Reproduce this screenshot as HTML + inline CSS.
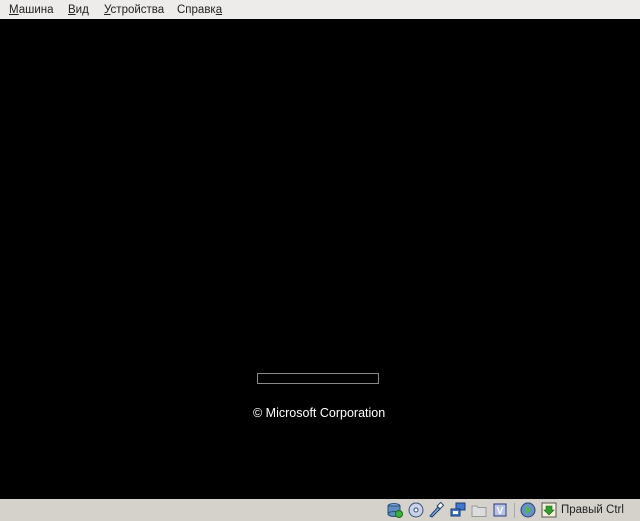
<!DOCTYPE html>
<html><head><meta charset="utf-8"><style>
body{margin:0;width:640px;height:521px;background:#000;overflow:hidden;position:relative;font-family:"Liberation Sans",sans-serif}
#menu{position:absolute;left:0;top:0;width:640px;height:19px;background:#edecea;font-size:11.5px;color:#222}
#menu span{position:absolute;top:4px}
#menu u{text-decoration:underline}
#bar{position:absolute;left:257px;top:373px;width:120px;height:9px;border:1px solid #8a8a8a}
#copy{position:absolute;left:253px;top:406px;color:#fff;font-size:12.5px}
#status{position:absolute;left:0;top:499px;width:640px;height:22px;background:#d5d2cc}
.ic{position:absolute;top:3px;width:16px;height:16px}
#st{position:absolute;left:561px;top:5px;font-size:11.5px;color:#222}
</style></head><body>
<div id="menu">
<span style="left:9px"><u>М</u>ашина</span>
<span style="left:68px"><u>В</u>ид</span>
<span style="left:104px"><u>У</u>стройства</span>
<span style="left:177px">Справк<u>а</u></span>
</div>
<div id="bar"></div>
<div id="copy">© Microsoft Corporation</div>
<div id="status">
<svg class="ic" style="left:387px" viewBox="0 0 16 16"><ellipse cx="7" cy="4" rx="6" ry="2.5" fill="#7fa8d0" stroke="#2a4f7a"/><rect x="1" y="4" width="12" height="8" fill="#5d8fc2" stroke="#2a4f7a"/><ellipse cx="7" cy="12" rx="6" ry="2.5" fill="#5d8fc2" stroke="#2a4f7a"/><circle cx="12" cy="12" r="3.5" fill="#3bb23b" stroke="#1a6a1a"/></svg>
<svg class="ic" style="left:408px" viewBox="0 0 16 16"><circle cx="8" cy="8" r="7" fill="#c8d3e8" stroke="#3a4f7a"/><circle cx="8" cy="8" r="2" fill="#fff" stroke="#3a4f7a"/></svg>
<svg class="ic" style="left:428px" viewBox="0 0 16 16"><path d="M2 14 L10 5 L12 7 L4 15 Z" fill="#7fa8d8" stroke="#1f3f70"/><rect x="10" y="1" width="4" height="5" transform="rotate(45 12 4)" fill="#fff" stroke="#1f3f70"/></svg>
<svg class="ic" style="left:450px" viewBox="0 0 16 16"><rect x="6" y="1" width="9" height="7" fill="#3c78d0" stroke="#1a3c70"/><rect x="1" y="7" width="9" height="7" fill="#3c78d0" stroke="#1a3c70"/><rect x="3" y="9" width="5" height="3" fill="#fff"/></svg>
<svg class="ic" style="left:471px" viewBox="0 0 16 16"><path d="M1 4h5l1 1.5h8v9H1z" fill="#ddd" stroke="#999"/></svg>
<svg class="ic" style="left:492px" viewBox="0 0 16 16"><rect x="2" y="2" width="12" height="12" fill="#b8c4e6" stroke="#2a3a7a"/><text x="8" y="12" font-size="10" font-weight="bold" text-anchor="middle" fill="#fff" font-family="Liberation Sans">V</text></svg>
<div style="position:absolute;left:514px;top:4px;width:1px;height:15px;background:#aaa"></div>
<svg class="ic" style="left:520px" viewBox="0 0 16 16"><circle cx="8" cy="8" r="7" fill="#6a8fc8" stroke="#2a4070"/><path d="M6 3l5 5-5 5z" fill="#4bbf3a"/></svg>
<svg class="ic" style="left:541px" viewBox="0 0 16 16"><rect x="1" y="1" width="14" height="14" fill="#f4f0d8" stroke="#555"/><path d="M5 4h6v4h2l-5 5-5-5h2z" fill="#2fa02f" stroke="#1a5a1a" stroke-width=".6"/></svg>
<span id="st">Правый Ctrl</span>
</div>
</body></html>
